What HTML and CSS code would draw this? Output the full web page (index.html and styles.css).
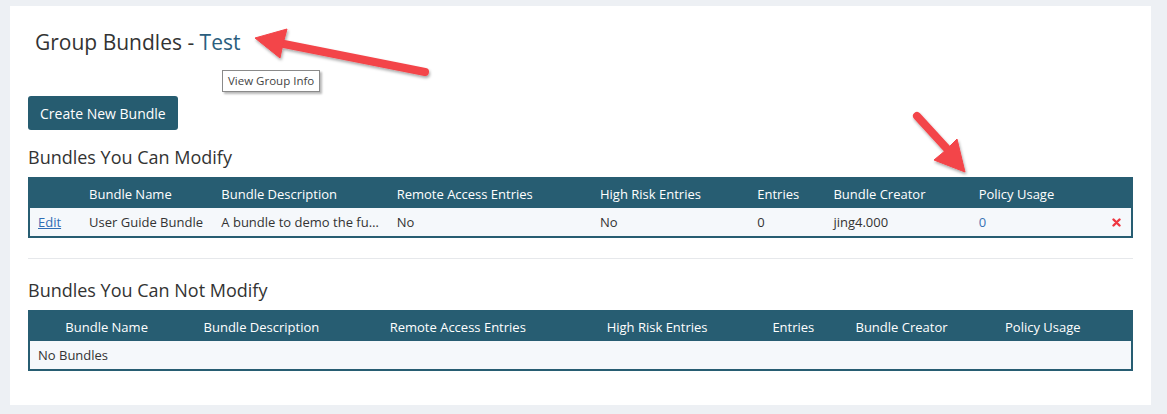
FILE: index.html
```html
<!DOCTYPE html>
<html lang="en">
<head>
<meta charset="utf-8">
<title>Group Bundles - Test</title>
<link rel="stylesheet" href="styles.css">
</head>
<body>
<div class="panel">
  <div class="title-wrap">
    <h1 class="title">Group Bundles - <a class="title-link" href="#">Test</a></h1>
    <div class="tooltip">View Group Info</div>
  </div>
  <button class="btn" type="button">Create New Bundle</button>

  <h2 class="section-title">Bundles You Can Modify</h2>
  <table class="grid grid-mod">
    <colgroup>
      <col class="m1"><col class="m2"><col class="m3"><col class="m4"><col class="m5"><col class="m6"><col class="m7"><col class="m8"><col class="m9">
    </colgroup>
    <thead>
      <tr>
        <th></th>
        <th>Bundle Name</th>
        <th>Bundle Description</th>
        <th>Remote Access Entries</th>
        <th>High Risk Entries</th>
        <th>Entries</th>
        <th>Bundle Creator</th>
        <th>Policy Usage</th>
        <th></th>
      </tr>
    </thead>
    <tbody>
      <tr>
        <td><a class="link" href="#">Edit</a></td>
        <td>User Guide Bundle</td>
        <td>A bundle to demo the fu…</td>
        <td>No</td>
        <td>No</td>
        <td>0</td>
        <td>jing4.000</td>
        <td><a class="usage" href="#">0</a></td>
        <td class="del">
          <svg class="del-icon" width="9" height="9" viewBox="0 0 9 9" aria-hidden="true"><path d="M1.5 1.5 L7.5 7.5 M7.5 1.5 L1.5 7.5" stroke="#ee3640" stroke-width="2.4" stroke-linecap="round"/></svg>
        </td>
      </tr>
    </tbody>
  </table>

  <hr class="sep">

  <h2 class="section-title">Bundles You Can Not Modify</h2>
  <table class="grid grid-ro">
    <colgroup>
      <col class="r1"><col class="r2"><col class="r3"><col class="r4"><col class="r5"><col class="r6"><col class="r7">
    </colgroup>
    <thead>
      <tr>
        <th>Bundle Name</th>
        <th>Bundle Description</th>
        <th>Remote Access Entries</th>
        <th>High Risk Entries</th>
        <th>Entries</th>
        <th>Bundle Creator</th>
        <th>Policy Usage</th>
      </tr>
    </thead>
    <tbody>
      <tr>
        <td colspan="7">No Bundles</td>
      </tr>
    </tbody>
  </table>
</div>

<svg class="annot" width="1167" height="414" viewBox="0 0 1167 414" aria-hidden="true">
  <defs>
    <filter id="sh" x="-20%" y="-20%" width="140%" height="140%">
      <feDropShadow dx="1" dy="2" stdDeviation="1.6" flood-color="#000" flood-opacity="0.35"/>
    </filter>
  </defs>
  <g filter="url(#sh)" fill="#f34449" stroke="#f34449">
    <line x1="425" y1="72" x2="284" y2="44" stroke-width="8" stroke-linecap="round"/>
    <polygon points="255,38 287,29 283,44 280,58" stroke-width="1" stroke-linejoin="round"/>
    <line x1="917" y1="116" x2="950" y2="152" stroke-width="8" stroke-linecap="round"/>
    <polygon points="965,172 934,160 946,150 957,139" stroke-width="1" stroke-linejoin="round"/>
  </g>
</svg>
</body>
</html>
```

FILE: styles.css
```css
* { box-sizing: border-box; }

html, body {
  margin: 0;
  padding: 0;
}

body {
  background: #edf0f4;
  font-family: "Open Sans", "Liberation Sans", sans-serif;
  color: #333;
  width: 1167px;
  height: 414px;
  overflow: hidden;
  position: relative;
}

.panel {
  background: #fff;
  margin: 6px 16px 0 10px;
  padding: 22px 18px 34px 18px;
}

.title-wrap {
  position: relative;
}

.title {
  margin: 0;
  padding-left: 7px;
  font-size: 21px;
  line-height: 28px;
  font-weight: 400;
  color: #333;
}

.title-link {
  color: #2b5e7e;
  text-decoration: none;
}

.tooltip {
  position: absolute;
  left: 194px;
  top: 42px;
  height: 22px;
  padding: 0 5px;
  font-size: 11.5px;
  line-height: 19px;
  color: #444;
  background: #fff;
  border: 1px solid #8a8a8a;
  box-shadow: 2px 2px 2px rgba(0,0,0,0.28);
  white-space: nowrap;
}

.btn {
  display: block;
  margin-top: 40px;
  height: 34px;
  padding: 0 12px;
  font-family: inherit;
  font-size: 14px;
  color: #fff;
  background: #265c70;
  border: 0;
  border-radius: 3px;
}

.section-title {
  margin: 15px 0 8px 0;
  font-size: 18px;
  line-height: 24px;
  font-weight: 400;
  color: #333;
}

.grid {
  width: 100%;
  table-layout: fixed;
  border-collapse: collapse;
  border: 2px solid #275d72;
  font-size: 13px;
}

.grid th {
  background: #275d72;
  color: #fff;
  font-weight: 400;
  height: 30px;
  padding: 1px 0 0 8px;
  text-align: left;
  white-space: nowrap;
}

.grid td {
  background: #f5f8fb;
  height: 29px;
  padding: 0 0 0 8px;
  white-space: nowrap;
  overflow: hidden;
}

.m1 { width: 52px; }
.m2 { width: 132px; }
.m3 { width: 175px; }
.m4 { width: 203px; }
.m5 { width: 157px; }
.m6 { width: 76px; }
.m7 { width: 145px; }
.m8 { width: 130px; }
.m9 { width: 31px; }

.link {
  color: #2f6db5;
  text-decoration: underline;
}

.usage {
  color: #3a73b5;
  text-decoration: none;
}

.grid td.del {
  padding: 0;
  text-align: center;
}

.del-icon {
  display: block;
  margin: 0 auto;
  position: relative;
  left: 1px;
}

.sep {
  margin: 20px 0 0 0;
  border: 0;
  border-top: 1px solid #e6e8eb;
}

.sep + .section-title {
  margin-top: 19px;
}

.grid-ro th {
  text-align: center;
  padding: 1px 0 0 0;
}

.grid-ro td {
  padding-left: 8px;
}

.r1 { width: 154px; }
.r2 { width: 156px; }
.r3 { width: 236px; }
.r4 { width: 162px; }
.r5 { width: 110px; }
.r6 { width: 106px; }
.r7 { width: 177px; }

.annot {
  position: absolute;
  left: 0;
  top: 0;
  pointer-events: none;
}
```
